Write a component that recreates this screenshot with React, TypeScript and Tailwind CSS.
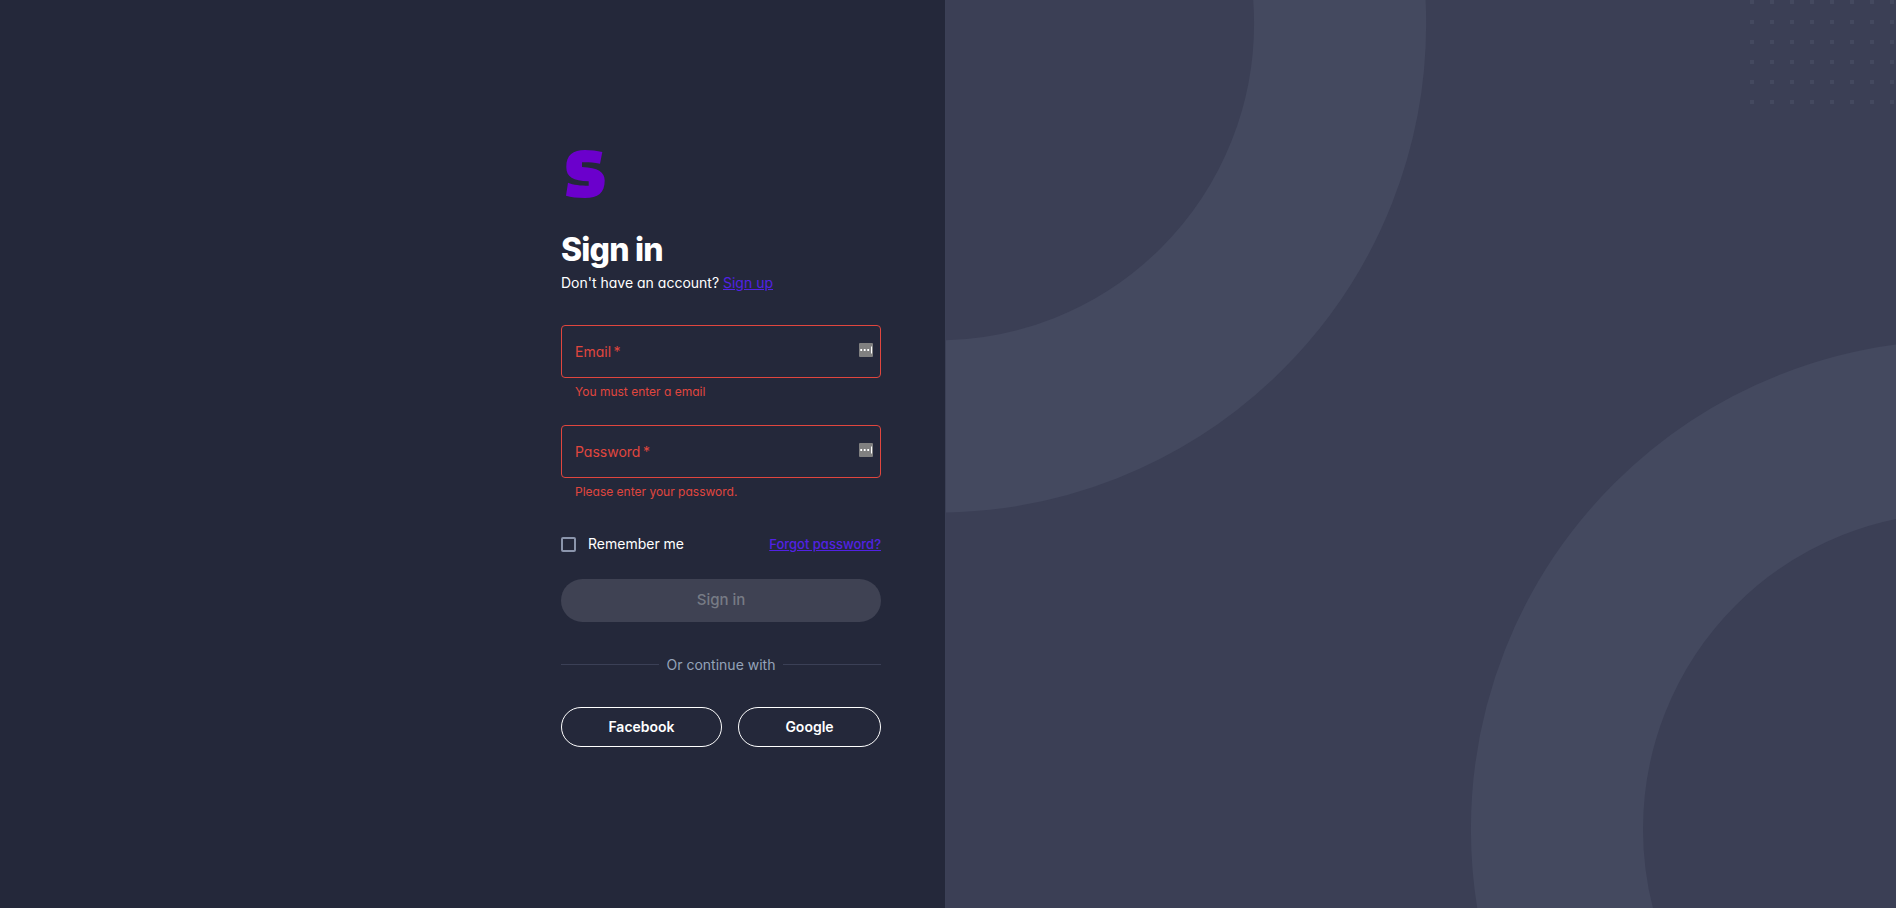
import { useState } from "react";
import clsx from "clsx";

type FieldProps = {
  id: string;
  label: string;
  type: string;
  error: string;
};

function Logo() {
  return (
    <svg className="h-14 w-12" viewBox="0 0 48 56" fill="#6b00cc" aria-hidden="true">
      <path d="M41.300 7 L39 18.700 C32 17.300 27 17.200 21 17.300 V22 C37 22.500 43.700 27 43.700 35.500 C43.700 48 37 53 24 53 C16 53 10 52 5 50.700 L7 37.700 C12 40 20 40.700 27.700 40.700 V36.300 C12 36 5.300 32 5.300 22 C5.300 10 12 5 24 5 C30 5 36 5.700 41.300 7 Z" />
    </svg>
  );
}

function AutofillIcon() {
  return (
    <svg className="pointer-events-none mb-1 size-3.5 shrink-0" viewBox="0 0 14 14" aria-hidden="true">
      <rect width="14" height="14" rx="1" fill="#808080" />
      <path d="M1.300 6h1.800v2h-1.800zM4.800 6h1.800v2h-1.800zM8.300 6h1.800v2h-1.800zM12 3.500h1v7h-1z" fill="#fff" />
    </svg>
  );
}

function Field({ id, label, type, error }: FieldProps) {
  const [value, setValue] = useState("");

  return (
    <div className="text-[#e0463e] [font-feature-settings:'cv11']">
      <div className="relative flex h-[53px] items-center rounded border border-[#e0463e] pr-[7px]">
        <label
          htmlFor={id}
          className={clsx("pointer-events-none absolute left-[13px] text-sm", value && "invisible")}
        >
          {label}&thinsp;*
        </label>
        <input
          id={id}
          type={type}
          value={value}
          onChange={(e) => setValue(e.target.value)}
          aria-invalid="true"
          aria-describedby={`${id}-error`}
          className="h-full min-w-0 flex-1 bg-transparent px-3 text-sm text-white outline-none"
        />
        <AutofillIcon />
      </div>
      <p id={`${id}-error`} className="mt-1 px-3.5 text-xs leading-5">
        {error}
      </p>
    </div>
  );
}

function SignInForm() {
  return (
    <form className="w-80 pb-4" onSubmit={(e) => e.preventDefault()}>
      <Logo />
      <h1 className="mt-[29px] text-[32px] leading-10 font-extrabold tracking-tight">Sign in</h1>
      <p className="mt-px text-sm leading-6 [font-feature-settings:'cv11']">
        Don't have an account?{" "}
        <a href="#sign-up" className="text-[#5222e4] underline">
          Sign up
        </a>
      </p>

      <div className="mt-[30px] flex flex-col gap-[23px]">
        <Field id="email" label="Email" type="email" error="You must enter a email" />
        <Field id="password" label="Password" type="password" error="Please enter your password." />
      </div>

      <div className="mt-8 flex items-center justify-between">
        <label className="flex items-center gap-3 text-sm">
          <input type="checkbox" className="size-[15px] appearance-none rounded-xs border-2 border-[#8b95ac] checked:bg-[#5222e4]" />
          Remember me
        </label>
        <a href="#forgot-password" className="text-[13px] leading-5 font-medium text-[#5222e4] underline [font-feature-settings:'cv11']">
          Forgot password?
        </a>
      </div>

      <button type="submit" disabled className="mt-[25px] h-[43px] w-full rounded-full bg-[#3f4253] text-[15px] font-medium text-[#777b85]">
        Sign in
      </button>

      <div className="mt-8 flex items-center gap-2">
        <div className="h-px flex-1 bg-[#3b4056]" />
        <span className="text-sm leading-[21px] text-[#94a3b8]">Or continue with</span>
        <div className="h-px flex-1 bg-[#3b4056]" />
      </div>

      <div className="mt-8 flex gap-4">
        <button type="button" className="h-10 flex-auto rounded-full border border-white text-sm font-semibold">
          Facebook
        </button>
        <button type="button" className="h-10 flex-auto rounded-full border border-white text-sm font-semibold">
          Google
        </button>
      </div>
    </form>
  );
}

function Backdrop() {
  return (
    <div className="relative hidden flex-1 overflow-hidden border-l border-[#3b4056] bg-[#3b3f55] md:block">
      <svg
        className="absolute inset-0 size-full"
        viewBox="201 9 552 528"
        preserveAspectRatio="xMidYMid slice"
        fill="none"
        stroke="#44495f"
        strokeWidth="100"
        aria-hidden="true"
      >
        <circle cx="196" cy="23" r="234" />
        <circle cx="790" cy="491" r="234" />
      </svg>
      <svg className="absolute top-0 right-0 h-[104px] w-[146px]" aria-hidden="true">
        <defs>
          <pattern id="dots" width="20" height="20" patternUnits="userSpaceOnUse">
            <rect width="4" height="4" fill="#44495f" />
          </pattern>
        </defs>
        <rect width="146" height="104" fill="url(#dots)" />
      </svg>
    </div>
  );
}

export default function App() {
  return (
    <div className="flex min-h-screen bg-[#24283a] font-['Inter',sans-serif] text-white">
      <main className="flex w-full items-center justify-center md:w-[calc(50%-3px)] md:justify-end md:pr-16">
        <SignInForm />
      </main>
      <Backdrop />
    </div>
  );
}
